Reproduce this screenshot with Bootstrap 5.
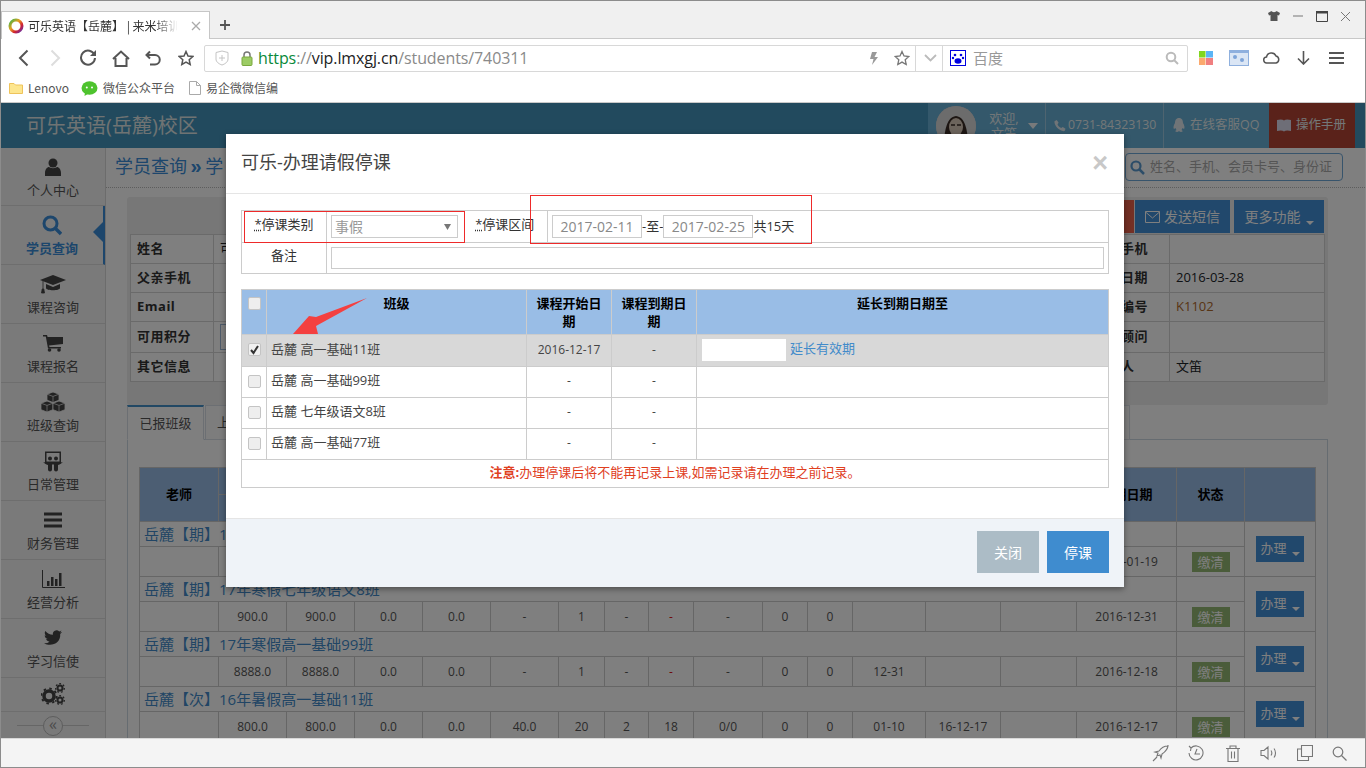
<!DOCTYPE html>
<html lang="zh-CN">
<head>
<meta charset="utf-8">
<title>可乐英语</title>
<link rel="stylesheet" href="https://cdn.jsdelivr.net/npm/bootstrap@5.3.0/dist/css/bootstrap.min.css">
<style>
:root{--fx:"Open Sans","Noto Sans CJK SC",sans-serif;}
html,body{height:100%;overflow:hidden;}
body{font-family:var(--fx);font-size:13px;color:#333;background:#fff;}
.winframe{width:1366px;height:768px;border:1px solid #8c8c8c;display:flex;flex-direction:column;overflow:hidden;}
/* browser chrome */
.tabstrip{height:38px;flex:none;background:#f0f0f0;border-bottom:1px solid #c8c8c8;padding-top:10px;}
.brtab{width:209px;height:28px;background:#fff;border:1px solid #c6c6c6;border-bottom:0;padding:0 8px 0 6px;gap:4px;font-family:"Noto Sans CJK SC",sans-serif;font-size:12px;color:#333;}
.brtabtext{width:150px;overflow:hidden;white-space:nowrap;-webkit-mask-image:linear-gradient(90deg,#000 85%,transparent);mask-image:linear-gradient(90deg,#000 85%,transparent);}
.newtab{margin-left:9px;margin-top:1px;}
.winbtns{margin-left:auto;padding-right:14px;gap:12px;height:12px;margin-top:-1px;}
.urlrow{height:38px;flex:none;background:#fff;padding-left:6px;}
.navic{width:32.5px;display:flex;justify-content:center;}
.addr{width:984px;flex:none;height:27px;margin-left:2px;border:1px solid #d8d8d8;border-radius:2px;}
.addrmain{width:711px;flex:none;height:100%;padding:0 5px 0 10px;border-right:1px solid #d8d8d8;}
.urltext{font-size:16px;margin-left:5px;margin-right:auto;color:#8a8a8a;font-family:"Open Sans",sans-serif;white-space:nowrap;letter-spacing:-.1px;}
.urltext b{font-weight:400;color:#0a8a3a;}
.urltext i{font-style:normal;color:#222;}
.addrdrop{width:27px;height:100%;border-right:1px solid #d8d8d8;justify-content:center;padding-left:3px;flex:none;}
.addrsearch{flex:1;height:100%;padding:0 8px 0 7px;color:#999;font-size:15px;font-family:"Noto Sans CJK SC",sans-serif;gap:7px;}
.addrsearch svg:last-child{margin-left:auto;}
.tools{margin-left:2px;gap:0;}
.toolic{width:32.5px;display:flex;justify-content:center;}
.favrow{height:26px;flex:none;background:#fff;border-bottom:1px solid #c9c9c9;padding:0 0 3px 8px;font-size:12px;color:#555;font-family:"Noto Sans CJK SC",sans-serif;gap:4px;}
.favitem{gap:5px;margin-right:8px;}
.favlast{gap:5px;margin-left:2px;}
/* page */
.pagearea{flex:1;position:relative;overflow:hidden;background:#fff;}
.apphead{height:45px;background:#4594bc;color:#dfe6e6;}
.apptitle{font-size:20px;padding-left:25px;margin-right:auto;}
.headcell{height:100%;background:#68b0d6;border-left:1px solid #9cc8e0;font-size:12.5px;color:#e6eef0;gap:3px;white-space:nowrap;}
.hc1{width:117px;padding-left:8px;border-left:0;}
.hc2{width:118px;padding-left:8px;gap:2px;font-size:12.3px;}
.hc3{width:106px;padding-left:8px;gap:4px;}
.hc4{width:86px;padding-left:7px;background:#b44434;border-left:0;gap:4px;}
.headend{width:10px;}
.avatar{width:40px;height:40px;border-radius:50%;background:#ccc;overflow:hidden;flex:none;}
.welcome{width:34px;line-height:15px;margin-left:8px;white-space:normal;text-align:center;font-size:13px;}
.usercaret{width:0;height:0;border-left:5px solid transparent;border-right:5px solid transparent;border-top:6px solid #f0f4f6;margin-left:4px;flex:none;}
.mainrow{display:flex;height:591px;}
.sidenav{width:105px;flex:none;background:#f4f4f4;border-right:1px solid #d8d8d8;position:relative;}
.sideitem{height:59px;border-bottom:1px solid #dcdcdc;color:#555;text-align:center;position:relative;padding-top:7px;font-size:13px;line-height:17px;}
.sideitem svg{display:block;margin:0 auto 3px;height:24px;}
.sideitem:first-child{height:58px;}
.sideitem.cur{color:#3a8dd8;font-weight:700;border-right:2px solid #3a8dd8;width:104px;}
.sideitem.cur::after{content:"";position:absolute;right:0;top:16px;border:10px solid transparent;border-right-color:#3a8dd8;border-left:0;}
.sidecogs{height:34px;padding-top:5px;border-bottom:1px solid #dcdcdc;}
.sidecogs svg{display:block;margin:0 auto;}
.sidefold{height:27px;justify-content:center;position:relative;}
.sidefold::before{content:"";position:absolute;left:16px;right:16px;top:13px;border-top:1px solid #ccc;}
.foldbtn{position:relative;width:20px;height:20px;border:1px solid #bbb;border-radius:50%;background:#f4f4f4;color:#999;font-size:16px;line-height:14px;text-align:center;}
.contentpane{flex:1;min-width:0;}
.crumbrow{height:40px;border-bottom:1px dotted #bbb;padding:0 0 0 9px;color:#3a8dd8;font-size:18px;}
.crumbtext{margin-right:auto;margin-top:-4px;}
.crumbsep{font-weight:700;font-size:20px;margin:0 3.500px;font-family:"Liberation Sans",sans-serif;}
.stusearch{width:218px;height:28px;margin:-1px 22px 0 0;border:1px solid #6fa8d8;border-radius:4px;font-size:13px;color:#aaa;padding-left:4px;gap:5px;background:#fff;}
.infopanel{margin:9px 37px 0 21px;height:208px;background:#eee;border-radius:3px;padding:3px 4px 0 3px;}
.actrow{height:34px;justify-content:flex-end;gap:4px;}
.actbtn{border-radius:0;border:0;height:33px;color:#fff;font-size:14px;padding:0;}
.actred{width:100px;background:#e8604a;margin-right:-3px;}
.actblue{background:#4290d8;width:95px;}
.actblue2{background:#4290d8;width:90px;}
.tcaret{display:inline-block;width:0;height:0;border:4px solid transparent;border-top-color:currentColor;border-bottom:0;margin-left:5px;vertical-align:-3px;}
.infotbl{table-layout:fixed;width:1194px;margin:0;background:#fff;--bs-table-bg:transparent;}
.infotbl td,.infotbl th{border:1px solid #d4d4d4;padding:0 6px;font-size:13px;vertical-align:middle;height:29px;}
.infotbl th{letter-spacing:.5px;color:#333;}
.infotbl tr:nth-child(4) td,.infotbl tr:nth-child(4) th{height:31px;}
.infotbl col:nth-child(1){width:83px;}
.infotbl col:nth-child(2){width:874px;}
.infotbl col:nth-child(3){width:82px;}
.infotbl col:nth-child(4){width:155px;}
.pointbox{width:60px;height:26px;border:1px solid #9cb7d4;display:block;}
.codeval{color:#b06a2a;}
.tabbar{margin:0 37px 0 21px;height:35px;border-bottom:1px solid #cdd8e2;}
.tabbar .nav-link{border-radius:0;color:#555;font-size:13px;padding:0;height:35px;line-height:33px;text-align:center;margin:0;background:#fafafa;border:1px solid #d8dfe6;}
.tabbar .nav-link.active{background:#fff;width:77px;border-top:2px solid #4590c8;border-bottom-color:#fff;color:#555;}
.tabnext{width:925px;margin-left:1px!important;text-align:left!important;padding-left:11px!important;}
.tabpane{margin:0 37px 0 21px;height:400px;border-left:1px solid #cdd8e2;border-right:1px solid #cdd8e2;padding:27px 13px 0 11px;}
.gridtbl{table-layout:fixed;width:1176px;margin:0;border-collapse:collapse;--bs-table-bg:transparent;}
.gridtbl col:nth-child(1){width:79px}.gridtbl col:nth-child(2){width:68px}.gridtbl col:nth-child(3){width:68px}.gridtbl col:nth-child(4){width:68px}.gridtbl col:nth-child(5){width:68px}.gridtbl col:nth-child(6){width:68px}.gridtbl col:nth-child(7){width:46px}.gridtbl col:nth-child(8){width:44px}.gridtbl col:nth-child(9){width:45px}.gridtbl col:nth-child(10){width:69px}.gridtbl col:nth-child(11){width:45px}.gridtbl col:nth-child(12){width:45px}.gridtbl col:nth-child(13){width:73px}.gridtbl col:nth-child(14){width:75px}.gridtbl col:nth-child(15){width:76px}.gridtbl col:nth-child(16){width:100px}.gridtbl col:nth-child(17){width:68px}.gridtbl col:nth-child(18){width:71px}
.gridtbl td,.gridtbl th{border:1px solid #ccc;padding:0;text-align:center;vertical-align:middle;font-size:12px;color:#555;overflow:hidden;white-space:nowrap;}
.gridtbl thead th{background:#99bde6;color:#000;height:27px;font-size:13px;font-weight:700;}
.gridtbl .grp{height:25px;text-align:left;padding-left:4px;font-size:15px;color:#428bca;line-height:1;}
.gridtbl .dat{height:30px;}
.opbtn{width:48px;height:26px;background:#4290d8;color:#fff;border:0;border-radius:0;padding:0;font-size:13px;}
.paidtag{display:inline-block;width:38px;height:20px;line-height:20px;background:#94b874;color:#fff;font-size:13px;vertical-align:middle;}
.reddash{color:#e01010!important;}
.statusline{height:29px;flex:none;background:#f4f4f4;border-top:1px solid #d8d8d8;justify-content:flex-end;padding-right:18px;gap:19.5px;}
/* modal */
.backshade{position:absolute;inset:0;background:rgba(0,0,0,.5);}
.stopdlg{position:absolute;left:225px;top:31px;width:898px;height:453px;border:0;border-radius:0;box-shadow:0 2px 6px rgba(0,0,0,.4);background:#fff;font-size:13px;}
.stopdlg .modal-header{height:60px;padding:0 15px;border-bottom:1px solid #e5e5e5;flex:none;}
.stopdlg .modal-title{font-size:18px;color:#444;font-weight:400;line-height:1;margin-top:-4px;}
.shutx{margin-left:auto;color:#c8c8c8;font-size:27px;font-weight:700;line-height:1;font-family:"Liberation Sans",sans-serif;margin-right:1px;}
.stopdlg .modal-body{padding:16px 15px 0;flex:1;}
.formtbl{width:868px;table-layout:fixed;margin:0 0 15px;--bs-table-bg:transparent;}
.formtbl td{border:1px solid #ccc;padding:0 4px;height:32px;vertical-align:middle;font-size:13px;color:#333;}
.formtbl tr:nth-child(2) td{height:31px;}
.formtbl col:nth-child(1){width:85px}.formtbl col:nth-child(2){width:144px}.formtbl col:nth-child(3){width:77px}
.fldlabel{text-align:center;font-size:13px;padding-bottom:4px!important;}
.nolineright{border-right:0!important;}
.nolineleft{border-left:0!important;padding-right:12px!important;}
.fldlabel abbr{color:#333;text-decoration:underline dotted;}
.kindsel{width:127px;height:23px;padding:0 0 0 3px;border:1px solid #ccc;border-radius:0;color:#999;font-size:14px;line-height:21px;background:#fff url("data:image/svg+xml,%3Csvg xmlns='http://www.w3.org/2000/svg' width='7' height='6'%3E%3Cpath d='M0 0h7L3.500 6z' fill='%23777'/%3E%3C/svg%3E") no-repeat right 6px center;background-size:7px 6px;}
.dayinp{width:90px;height:23px;border:1px solid #ccc;border-radius:0;padding:0;text-align:center;color:#888;font-size:14px;}
.dayline{gap:0;font-size:13px;padding-left:0;}
.memoinp{width:773px;height:22px;border:1px solid #ccc;border-radius:0;padding:0;display:block;}
.classtbl{width:868px;table-layout:fixed;margin:0;--bs-table-bg:transparent;}
.classtbl col:nth-child(1){width:25px}.classtbl col:nth-child(2){width:260px}.classtbl col:nth-child(3){width:85px}.classtbl col:nth-child(4){width:85px}
.classtbl th,.classtbl td{border:1px solid #ccc;padding:0 5px 2px;height:31px;font-size:12px;vertical-align:middle;color:#444;text-align:center;}
.classtbl thead th{background:#99bde6;color:#000;font-weight:700;font-size:13px;height:45px;vertical-align:top;padding-top:4px;line-height:18px;}
.classtbl .cname{text-align:left;font-size:13px;padding-left:4px;}
.classtbl .cext{text-align:left;}
.classtbl .chkcell{padding:0;text-align:center;}
.classtbl thead .chkcell{padding-top:4px;}
.tickbox{appearance:none;-webkit-appearance:none;margin:-3px 0 0;vertical-align:middle;width:13px;height:13px;border:1px solid #c4c4c4;border-radius:2px;background:#eee;display:inline-block;}
.tickbox:checked{background:#f0f0f0 url("data:image/svg+xml,%3Csvg xmlns='http://www.w3.org/2000/svg' width='11' height='11'%3E%3Cpath d='M2 6l2.500 3L9 2' fill='none' stroke='%23333' stroke-width='2'/%3E%3C/svg%3E") no-repeat center;}
.classtbl .picked td{background:#d8d8d8;height:32px;}
.extbox{width:84px;height:22px;border:0;background:#fff;vertical-align:middle;margin-right:4px;}
.extlink{color:#428bca;text-decoration:none;font-size:13px;}
.notecell{color:#e0401f!important;font-size:13px!important;height:28px!important;}
.stopdlg .modal-footer{height:69px;flex:none;background:#eff3f8;border-top:1px solid #e5e5e5;border-radius:0;padding:0 15px 2px 0;gap:8px;justify-content:flex-end;}
.stopdlg .modal-footer .btn{margin:0;width:62px;height:42px;border:0;border-radius:0;color:#fff;font-size:14px;padding:0;}
.btnshut{background:#acbcc6;}
.btnstop{background:#3f8ccf;}
.markbox{position:absolute;border:1px solid #ee2a2a;pointer-events:none;}
.mb1{left:18px;top:77px;width:221px;height:32px;}
.mb2{left:304px;top:61px;width:282px;height:49px;}
.markarrow{position:absolute;left:0;top:0;width:898px;height:453px;pointer-events:none;}
</style>
</head>
<body>
<div class="winframe">
  <div class="tabstrip d-flex">
    <div class="brtab d-flex align-items-center">
      <svg width="16" height="16" viewBox="0 0 16 16"><defs><linearGradient id="ring" x1="0" y1="0" x2="1" y2="1"><stop offset="0" stop-color="#3cb44a"/><stop offset=".4" stop-color="#e8a020"/><stop offset=".7" stop-color="#d02030"/><stop offset="1" stop-color="#6030b0"/></linearGradient></defs><circle cx="8" cy="8" r="6" fill="none" stroke="url(#ring)" stroke-width="3"/></svg>
      <span class="brtabtext">可乐英语【岳麓】 | 来米培训</span>
      <svg class="ms-auto" width="10" height="10" viewBox="0 0 10 10"><path d="M1 1l8 8M9 1l-8 8" stroke="#aaa" stroke-width="1.300"/></svg>
    </div>
    <svg class="newtab align-self-center" width="12" height="12" viewBox="0 0 12 12"><path d="M6 1v10M1 6h10" stroke="#555" stroke-width="1.800"/></svg>
    <div class="winbtns d-flex align-items-center">
      <svg width="12" height="10" viewBox="0 0 12 10"><path d="M3.500 0L0 2l1 2.500 1.500-.5v6h7V4l1.500.5L12 2 8.500 0C8 1.500 4 1.500 3.500 0z" fill="#555"/></svg>
      <svg width="12" height="10" viewBox="0 0 12 10"><path d="M1 5h10" stroke="#777" stroke-width="1"/></svg>
      <svg width="12" height="11" viewBox="0 0 12 11"><path d="M.5 2h11v8.500H.5z" fill="none" stroke="#444"/><path d="M0 1h12" stroke="#444" stroke-width="2"/></svg>
      <svg width="11" height="11" viewBox="0 0 11 11"><path d="M1 1l9 9M10 1l-9 9" stroke="#777"/></svg>
    </div>
  </div>
  <div class="urlrow d-flex align-items-center">
    <div class="d-flex align-items-center">
      <span class="navic"><svg width="11" height="18" viewBox="0 0 11 18"><path d="M9.500 1.500L2 9l7.500 7.500" fill="none" stroke="#555" stroke-width="2"/></svg></span>
      <span class="navic"><svg width="11" height="18" viewBox="0 0 11 18"><path d="M1.500 1.500L9 9l-7.500 7.500" fill="none" stroke="#ddd" stroke-width="2"/></svg></span>
      <span class="navic"><svg width="18" height="18" viewBox="0 0 18 18"><path d="M15.500 6A7 7 0 1 0 16 9" fill="none" stroke="#555" stroke-width="2"/><path d="M17 1v6h-6z" fill="#555"/></svg></span>
      <span class="navic"><svg width="18" height="17" viewBox="0 0 18 17"><path d="M1 9l8-7.500L17 9M3.500 8v8h11V8" fill="none" stroke="#555" stroke-width="2"/></svg></span>
      <span class="navic"><svg width="16" height="16" viewBox="0 0 16 16"><path d="M5 1.500L1.500 5 5 8.500M2 5h8a4.500 4.500 0 0 1 0 9.500H5" fill="none" stroke="#555" stroke-width="2"/></svg></span>
      <span class="navic"><svg width="16" height="16" viewBox="0 0 16 16"><path d="M8 1.500l2 4.500 4.800.5-3.600 3.200 1 4.800L8 12.100l-4.200 2.400 1-4.800L1.200 6.500 6 6z" fill="none" stroke="#555" stroke-width="1.500"/></svg></span>
    </div>
    <div class="addr d-flex align-items-center">
      <div class="addrmain d-flex align-items-center">
        <svg class="me-2" width="14" height="16" viewBox="0 0 14 16"><path d="M1 2.500L7 1l6 1.500V9c0 3-3 5-6 6-3-1-6-3-6-6z" fill="none" stroke="#c4c4c4"/><path d="M7 5v6M4 8h6" stroke="#c4c4c4"/></svg>
        <svg class="ms-1" width="12" height="15" viewBox="0 0 12 15"><path d="M3 6V4a3 3 0 0 1 6 0v2" fill="none" stroke="#777" stroke-width="1.500"/><rect x="1" y="6" width="10" height="8.500" rx="1" fill="#9ccc65" stroke="#7aa83f"/></svg>
        <span class="urltext"><b>https</b>://<i>vip.lmxgj.cn</i>/students/740311</span>
        <svg class="me-3" width="9" height="13" viewBox="0 0 9 13"><path d="M3 0h5L5.500 5H9l-6 8 1.500-6H1z" fill="#999"/></svg>
        <svg width="16" height="16" viewBox="0 0 16 16"><path d="M8 1.500l2 4.500 4.800.5-3.600 3.200 1 4.800L8 12.100l-4.200 2.400 1-4.800L1.200 6.500 6 6z" fill="none" stroke="#777" stroke-width="1.300"/></svg>
      </div>
      <div class="addrdrop d-flex align-items-center"><svg width="13" height="8" viewBox="0 0 13 8"><path d="M1 1l5.500 5.500L12 1" fill="none" stroke="#bbb" stroke-width="1.800"/></svg></div>
      <div class="addrsearch d-flex align-items-center">
        <svg width="16" height="16" viewBox="0 0 16 16"><rect x=".5" y=".5" width="15" height="15" fill="#fff" stroke="#0000e0"/><ellipse cx="8" cy="11" rx="3.500" ry="2.800" fill="#0000e0"/><circle cx="5" cy="5" r="1.300" fill="#0000e0"/><circle cx="11" cy="5" r="1.300" fill="#0000e0"/><circle cx="3" cy="8" r="1.200" fill="#0000e0"/><circle cx="13" cy="8" r="1.200" fill="#0000e0"/></svg>
        <span>百度</span>
        <svg width="14" height="14" viewBox="0 0 14 14"><circle cx="6" cy="6" r="4.300" fill="none" stroke="#bbb" stroke-width="2"/><path d="M9 9l4 4" stroke="#bbb" stroke-width="2"/></svg>
      </div>
    </div>
    <div class="tools d-flex align-items-center">
      <span class="toolic"><svg width="14" height="14" viewBox="0 0 14 14"><rect width="6.500" height="6.500" fill="#7fd61e"/><rect x="7" width="7" height="6.500" fill="#5ab4f5"/><rect y="7" width="6.500" height="7" fill="#fba96e"/><rect x="7" y="7" width="7" height="7" fill="#f07f80"/></svg></span>
      <span class="toolic"><svg width="20" height="16" viewBox="0 0 20 16"><rect x=".5" y=".5" width="19" height="15" fill="#dbe6f5" stroke="#8fb0de"/><path d="M0 0h20v3H0z" fill="#8fb0de"/><circle cx="6" cy="7" r="2" fill="#7ea4d8"/><circle cx="13" cy="10" r="2" fill="#7ea4d8"/></svg></span>
      <span class="toolic"><svg width="17" height="12" viewBox="0 0 17 12"><path d="M4 11a3 3 0 0 1-.5-6A5 5 0 0 1 13 4a3.600 3.600 0 0 1 0 7z" fill="none" stroke="#555" stroke-width="1.500"/></svg></span>
      <span class="toolic"><svg width="13" height="14" viewBox="0 0 13 14"><path d="M6.500 0v12.500M1 7.500l5.500 5.500L12 7.500" fill="none" stroke="#555" stroke-width="1.600"/></svg></span>
      <span class="toolic"><svg width="15" height="12" viewBox="0 0 15 12"><path d="M0 1h15M0 6h15M0 11h15" stroke="#555" stroke-width="2"/></svg></span>
    </div>
  </div>
  <div class="favrow d-flex align-items-center">
    <span class="favitem d-flex align-items-center"><svg width="14" height="12" viewBox="0 0 14 12"><path d="M.5 1.500h4.500l1.500 1.500h7v8.500H.5z" fill="#fde68f" stroke="#eec35b"/></svg>Lenovo</span>
    <span class="favitem d-flex align-items-center"><svg width="17" height="15" viewBox="0 0 17 15"><ellipse cx="8.500" cy="7" rx="8" ry="6.800" fill="#4ec32e"/><path d="M4 11l-.5 4 4-2.500z" fill="#4ec32e"/><circle cx="5.800" cy="6.500" r="1" fill="#fff"/><circle cx="11" cy="6.500" r="1" fill="#fff"/></svg>微信公众平台</span>
    <span class="favlast d-flex align-items-center"><svg width="12" height="14" viewBox="0 0 12 14"><path d="M.5.500h7l4 4v9H.5zM7.500 .5v4h4" fill="#fff" stroke="#aaa"/></svg>易企微微信编</span>
  </div>

  <div class="pagearea">
    <header class="apphead d-flex align-items-center">
      <div class="apptitle">可乐英语(岳麓)校区</div>
      <div class="headcell hc1 d-flex align-items-center">
        <div class="avatar"><svg width="40" height="40" viewBox="0 0 40 40"><rect width="40" height="40" fill="#d8d8d8"/><path d="M8 40c0-9 1-29 12-30 11 1 12 21 12 30z" fill="#3a2c26"/><ellipse cx="20" cy="21" rx="7" ry="9" fill="#d8c8b8"/><path d="M15 19h4M21 19h4" stroke="#3a2c26" stroke-width="1.500"/></svg></div>
        <div class="welcome">欢迎,文笛</div>
        <span class="usercaret"></span>
      </div>
      <div class="headcell hc2 d-flex align-items-center"><svg width="12" height="13" viewBox="0 0 13 13"><path d="M3 .5L5 3.500 3.800 5.200c.6 1.800 2.200 3.400 4 4L9.500 8l3 2-1 2.500c-5 1-11.500-5.500-11-10.500z" fill="#e0e8ee"/></svg>0731-84323130</div>
      <div class="headcell hc3 d-flex align-items-center"><svg width="14" height="15" viewBox="0 0 13 15"><path d="M6.500 0C3.500 0 2.500 2.500 2.500 5 1 7.500.5 10 1.500 11l1.500-1c.2 1 .8 1.700 1 2-1 .5-1.500 1-1 1.500 1 .7 2.800.5 3.500-.5.700 1 2.500 1.200 3.500.5.500-.5 0-1-1-1.500.2-.3.800-1 1-2l1.500 1c1-1 .5-3.500-1-6 0-2.500-1-5-4-5z" fill="#e0e8ee"/></svg>在线客服QQ</div>
      <div class="headcell hc4 d-flex align-items-center"><svg width="16" height="13" viewBox="0 0 16 13"><path d="M1 1c3-.8 5.500-.8 7 .5C9.500.2 12 .2 15 1v11c-3-.8-5.500-.8-7 .5-1.500-1.300-4-1.300-7-.5z" fill="#dde"/></svg>操作手册</div>
      <div class="headend"></div>
    </header>
    <div class="mainrow">
      <nav class="sidenav">
        <div class="sideitem"><svg width="18" height="18" viewBox="0 0 18 18"><circle cx="9" cy="5" r="4.500" fill="#444"/><path d="M1 18v-3c0-4 2.500-6 4-6 2 1.500 6 1.500 8 0 1.500 0 4 2 4 6v3z" fill="#444"/></svg>个人中心</div>
        <div class="sideitem cur"><svg width="20" height="20" viewBox="0 0 20 20"><circle cx="8.500" cy="8.500" r="6.500" fill="none" stroke="#3a8dd8" stroke-width="3"/><path d="M13 13l6 6" stroke="#3a8dd8" stroke-width="3.400"/></svg>学员查询</div>
        <div class="sideitem"><svg width="26" height="20" viewBox="0 0 26 20"><path d="M13 1L0 6l13 5 13-5z" fill="#444"/><path d="M6 10v4c0 3 14 3 14 0v-4l-7 3z" fill="#444"/><path d="M3 7v8M2.200 15l-.7 4h3l-.7-4z" fill="#444" stroke="#444" stroke-width=".8"/></svg>课程咨询</div>
        <div class="sideitem"><svg width="20" height="18" viewBox="0 0 20 18"><path d="M0 1h4l.6 2H20v7l-14 1.500.5 1.500H18v1.500H5L2.800 2.500H0z" fill="#444"/><circle cx="6.500" cy="16" r="1.800" fill="#444"/><circle cx="16" cy="16" r="1.800" fill="#444"/></svg>课程报名</div>
        <div class="sideitem"><svg width="26" height="22" viewBox="0 0 26 22"><path d="M13 1l6 2.200v6L13 11.500 7 9.200v-6z" fill="#444" stroke="#f4f4f4" stroke-width=".8"/><path d="M7 10l6 2.200v6.500L7 21l-6-2.300V12.200z" fill="#444" stroke="#f4f4f4" stroke-width=".8"/><path d="M19 10l6 2.200v6.500L19 21l-6-2.300V12.200z" fill="#444" stroke="#f4f4f4" stroke-width=".8"/><path d="M7 3.200l6 2.200 6-2.200M1 12.200l6 2.200 6-2.200 6 2.200 6-2.200M7 14.400V21M19 14.400V21M13 5.400v6" fill="none" stroke="#f4f4f4" stroke-width=".7"/></svg>班级查询</div>
        <div class="sideitem"><svg width="20" height="21" viewBox="0 0 20 21"><path d="M2 1h16v11c1 0 2-1 2-1-1 2-3 3-5 3.500V19c0 1-1 2-2 2s-2-1-2-2v-5h-2v5c0 1-1 2-2 2s-2-1-2-2v-4.500C3 14 1 13 0 11c0 0 1 1 2 1z" fill="#444"/><rect x="3.500" y="2.500" width="13" height="8.500" fill="#f4f4f4"/><circle cx="7" cy="8" r="2" fill="#444"/><circle cx="13" cy="8" r="2" fill="#444"/></svg>日常管理</div>
        <div class="sideitem"><svg width="18" height="16" viewBox="0 0 18 16"><path d="M0 2h18M0 8h18M0 14h18" stroke="#444" stroke-width="3"/></svg>财务管理</div>
        <div class="sideitem"><svg width="23" height="18" viewBox="0 0 23 18"><path d="M.5 0v17.500H23" fill="none" stroke="#444"/><path d="M5 11h2.500v5H5zM9 7h2.500v9H9zM13 9h2.500v7H13zM17 3h2.500v13H17z" fill="#444"/></svg>经营分析</div>
        <div class="sideitem"><svg width="18" height="16" viewBox="0 0 18 16"><path d="M18 2c-.7.300-1.400.5-2.100.6.800-.5 1.300-1.200 1.600-2-.7.400-1.500.7-2.300.9A3.700 3.700 0 0 0 8.900 4.800C5.900 4.600 3.200 3.200 1.300.9c-1 1.700-.5 3.800 1.100 4.900-.6 0-1.200-.2-1.700-.5 0 1.800 1.300 3.300 3 3.700-.5.100-1.100.2-1.700.1.500 1.500 1.900 2.500 3.500 2.600A7.500 7.500 0 0 1 0 13.200C7 17 17 13.500 16.200 4c.7-.5 1.300-1.200 1.800-2z" fill="#444"/></svg>学习信使</div>
        <div class="sidecogs"><svg width="24" height="22" viewBox="0 0 24 22"><circle cx="8" cy="13" r="5" fill="none" stroke="#444" stroke-width="3.500"/><circle cx="8" cy="13" r="7.500" fill="none" stroke="#444" stroke-width="1.800" stroke-dasharray="2.500 3.400"/><circle cx="19" cy="5" r="2.500" fill="none" stroke="#444" stroke-width="2"/><circle cx="19" cy="5" r="4.300" fill="none" stroke="#444" stroke-width="1.300" stroke-dasharray="1.800 2"/><circle cx="19" cy="17" r="2.500" fill="none" stroke="#444" stroke-width="2"/><circle cx="19" cy="17" r="4.300" fill="none" stroke="#444" stroke-width="1.300" stroke-dasharray="1.800 2"/></svg></div>
        <div class="sidefold d-flex align-items-center"><div class="foldbtn">«</div></div>
      </nav>
      <main class="contentpane">
        <div class="crumbrow d-flex align-items-center">
          <div class="crumbtext">学员查询<span class="crumbsep">»</span>学</div>
          <div class="stusearch d-flex align-items-center"><svg width="15" height="15" viewBox="0 0 15 15"><circle cx="6" cy="6" r="4.500" fill="none" stroke="#5a9bd0" stroke-width="2.200"/><path d="M9.500 9.500l4.500 4.500" stroke="#5a9bd0" stroke-width="2.500"/></svg>姓名、手机、会员卡号、身份证</div>
        </div>
        <section class="infopanel">
          <div class="actrow d-flex">
            <button class="btn actbtn actred" type="button">办理</button>
            <button class="btn actbtn actblue d-flex align-items-center justify-content-center gap-1" type="button"><svg width="15" height="12" viewBox="0 0 15 12"><path d="M.5.500h14v11H.5zM.5 1l7 6 7-6" fill="none" stroke="#fff"/></svg>发送短信</button>
            <button class="btn actbtn actblue2" type="button">更多功能<span class="tcaret"></span></button>
          </div>
          <table class="table infotbl">
            <colgroup><col><col><col><col></colgroup>
            <tr><th>姓名</th><td>可乐</td><th>母亲手机</th><td></td></tr>
            <tr><th>父亲手机</th><td></td><th>报名日期</th><td>2016-03-28</td></tr>
            <tr><th>Email</th><td></td><th>学员编号</th><td class="codeval">K1102</td></tr>
            <tr><th>可用积分</th><td><span class="pointbox"></span></td><th>课程顾问</th><td></td></tr>
            <tr><th>其它信息</th><td></td><th>经办人</th><td>文笛</td></tr>
          </table>
        </section>
        <ul class="nav tabbar d-flex">
          <li class="nav-item"><a class="nav-link active" href="#">已报班级</a></li>
          <li class="nav-item"><a class="nav-link tabnext" href="#">上课记录</a></li>
        </ul>
        <div class="tabpane">
          <table class="table gridtbl">
            <colgroup><col><col><col><col><col><col><col><col><col><col><col><col><col><col><col><col><col><col></colgroup>
            <thead>
              <tr><th rowspan="2">老师</th><th colspan="14"></th><th rowspan="2">到期日期</th><th rowspan="2">状态</th><th rowspan="2"></th></tr>
              <tr><th colspan="14"></th></tr>
            </thead>
            <tbody>
              <tr><td colspan="16" class="grp">岳麓【期】17年寒假高一基础77班</td><td class="grp"></td><td rowspan="2"><button class="btn opbtn" type="button">办理<span class="tcaret"></span></button></td></tr>
              <tr class="dat"><td class="dat"></td><td></td><td></td><td></td><td></td><td></td><td></td><td></td><td></td><td></td><td></td><td></td><td></td><td></td><td></td><td>2017-01-19</td><td><span class="paidtag">缴清</span></td></tr>
              <tr><td colspan="16" class="grp">岳麓【期】17年寒假七年级语文8班</td><td class="grp"></td><td rowspan="2"><button class="btn opbtn" type="button">办理<span class="tcaret"></span></button></td></tr>
              <tr class="dat"><td class="dat"></td><td>900.0</td><td>900.0</td><td>0.0</td><td>0.0</td><td>-</td><td>1</td><td>-</td><td class="reddash">-</td><td>-</td><td>0</td><td>0</td><td></td><td></td><td></td><td>2016-12-31</td><td><span class="paidtag">缴清</span></td></tr>
              <tr><td colspan="16" class="grp">岳麓【期】17年寒假高一基础99班</td><td class="grp"></td><td rowspan="2"><button class="btn opbtn" type="button">办理<span class="tcaret"></span></button></td></tr>
              <tr class="dat"><td class="dat"></td><td>8888.0</td><td>8888.0</td><td>0.0</td><td>0.0</td><td>-</td><td>1</td><td>-</td><td class="reddash">-</td><td>-</td><td>0</td><td>0</td><td>12-31</td><td></td><td></td><td>2016-12-18</td><td><span class="paidtag">缴清</span></td></tr>
              <tr><td colspan="16" class="grp">岳麓【次】16年暑假高一基础11班</td><td class="grp"></td><td rowspan="2"><button class="btn opbtn" type="button">办理<span class="tcaret"></span></button></td></tr>
              <tr class="dat"><td class="dat"></td><td>800.0</td><td>800.0</td><td>0.0</td><td>0.0</td><td>40.0</td><td>20</td><td>2</td><td>18</td><td>0/0</td><td>0</td><td>0</td><td>01-10</td><td>16-12-17</td><td></td><td>2016-12-17</td><td><span class="paidtag">缴清</span></td></tr>
            </tbody>
          </table>
        </div>
      </main>
    </div>

    <div class="backshade"></div>
    <div class="modal-content stopdlg">
      <div class="modal-header">
        <h4 class="modal-title">可乐-办理请假停课</h4>
        <span class="shutx">×</span>
      </div>
      <div class="modal-body">
        <table class="table formtbl">
          <colgroup><col><col><col><col></colgroup>
          <tr>
            <td class="fldlabel"><abbr>*</abbr>停课类别</td>
            <td class="nolineright"><div class="kindsel">事假</div></td>
            <td class="fldlabel nolineleft"><abbr>*</abbr>停课区间</td>
            <td><div class="dayline d-flex align-items-center"><input class="form-control dayinp" value="2017-02-11">-至-<input class="form-control dayinp" value="2017-02-25">共15天</div></td>
          </tr>
          <tr>
            <td class="fldlabel">备注</td>
            <td colspan="3"><input class="form-control memoinp"></td>
          </tr>
        </table>
        <table class="table classtbl">
          <colgroup><col><col><col><col><col></colgroup>
          <thead>
            <tr><th class="chkcell"><input class="tickbox" type="checkbox"></th><th>班级</th><th>课程开始日期</th><th>课程到期日期</th><th>延长到期日期至</th></tr>
          </thead>
          <tbody>
            <tr class="picked"><td class="chkcell"><input class="tickbox" type="checkbox" checked></td><td class="cname">岳麓 高一基础11班</td><td>2016-12-17</td><td>-</td><td class="cext"><input class="extbox"><a class="extlink" href="#">延长有效期</a></td></tr>
            <tr><td class="chkcell"><input class="tickbox" type="checkbox"></td><td class="cname">岳麓 高一基础99班</td><td>-</td><td>-</td><td class="cext"></td></tr>
            <tr><td class="chkcell"><input class="tickbox" type="checkbox"></td><td class="cname">岳麓 七年级语文8班</td><td>-</td><td>-</td><td class="cext"></td></tr>
            <tr><td class="chkcell"><input class="tickbox" type="checkbox"></td><td class="cname">岳麓 高一基础77班</td><td>-</td><td>-</td><td class="cext"></td></tr>
            <tr><td colspan="5" class="notecell"><b>注意:</b>办理停课后将不能再记录上课,如需记录请在办理之前记录。</td></tr>
          </tbody>
        </table>
      </div>
      <div class="modal-footer">
        <button class="btn btnshut" type="button">关闭</button>
        <button class="btn btnstop" type="button">停课</button>
      </div>
      <div class="markbox mb1"></div>
      <div class="markbox mb2"></div>
      <svg class="markarrow" viewBox="0 0 898 453"><polygon points="141,164 90,183 83,182 67,200 92,200 90,192" fill="#f44040"/></svg>
    </div>
  </div>

  <footer class="statusline d-flex align-items-center">
    <svg width="17" height="17" viewBox="0 0 17 17"><path d="M16 1c-4 0-7 2-9 5L3 7l3 1-1 3 3-1 1 3 1-4c3-2 6-5 6-9zM5 12l-4 4" fill="none" stroke="#777" stroke-width="1.100"/></svg>
    <svg width="17" height="17" viewBox="0 0 17 17"><path d="M3 3a7 7 0 1 1-2 5M1 1l2 2-.5 3M9 4L7 9h5" fill="none" stroke="#777" stroke-width="1.100"/></svg>
    <svg width="16" height="17" viewBox="0 0 16 17"><path d="M1 3.500h14M5 3.500V1h6v2.500M3 3.500v13h10v-13M6.500 6.500v7M9.500 6.500v7" fill="none" stroke="#777" stroke-width="1.100"/></svg>
    <svg width="17" height="16" viewBox="0 0 17 16"><path d="M1 5.500h3L8 2v12l-4-3.500H1zM11 5.500c1 1.500 1 3.500 0 5M14 3.500c2 2.500 2 6.500 0 9" fill="none" stroke="#777" stroke-width="1.100"/></svg>
    <svg width="16" height="16" viewBox="0 0 16 16"><path d="M4.500 11.500V.5h11v11zM4.500 4H.5v11.500h11V11.500" fill="none" stroke="#777" stroke-width="1.100"/></svg>
    <svg width="15" height="15" viewBox="0 0 15 15"><circle cx="6" cy="6" r="4.800" fill="none" stroke="#777" stroke-width="1.200"/><path d="M9.500 9.500l5 5" stroke="#777" stroke-width="1.200"/></svg>
  </footer>
</div>
<script src="https://cdn.jsdelivr.net/npm/bootstrap@5.3.0/dist/js/bootstrap.bundle.min.js"></script>
</body>
</html>
